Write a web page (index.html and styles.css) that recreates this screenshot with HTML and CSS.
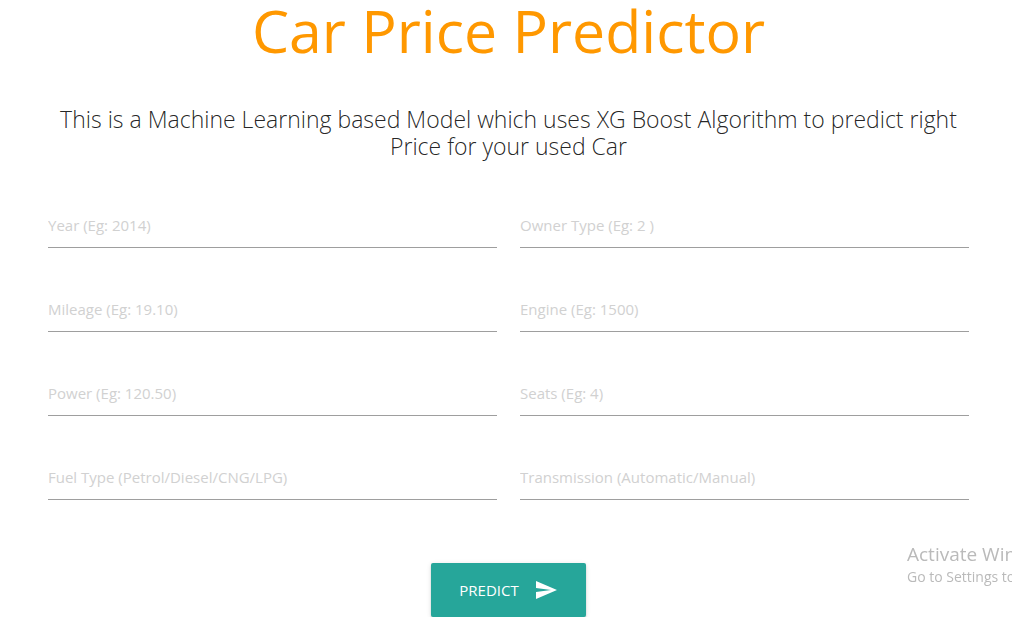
FILE: index.html
```html
<!DOCTYPE html>
<html lang="en">
<head>
<meta charset="utf-8">
<meta name="viewport" content="width=device-width, initial-scale=1">
<title>Car Price Predictor</title>
<link rel="stylesheet" href="styles.css">
</head>
<body>
<main class="page">
  <h1 class="title">Car Price Predictor</h1>
  <h2 class="subtitle">This is a Machine Learning based Model which uses XG Boost Algorithm to predict right Price for your used Car</h2>
  <form class="form">
    <div class="fields">
      <input class="field" type="text" name="year" aria-label="Year" placeholder="Year (Eg: 2014)">
      <input class="field" type="text" name="owner" aria-label="Owner Type" placeholder="Owner Type (Eg: 2 )">
      <input class="field" type="text" name="mileage" aria-label="Mileage" placeholder="Mileage (Eg: 19.10)">
      <input class="field" type="text" name="engine" aria-label="Engine" placeholder="Engine (Eg: 1500)">
      <input class="field" type="text" name="power" aria-label="Power" placeholder="Power (Eg: 120.50)">
      <input class="field" type="text" name="seats" aria-label="Seats" placeholder="Seats (Eg: 4)">
      <input class="field" type="text" name="fuel" aria-label="Fuel Type" placeholder="Fuel Type (Petrol/Diesel/CNG/LPG)">
      <input class="field" type="text" name="transmission" aria-label="Transmission" placeholder="Transmission (Automatic/Manual)">
    </div>
    <button class="predict" type="submit">Predict
      <svg class="send" viewBox="0 0 24 24" aria-hidden="true"><path d="M2.01 21L23 12 2.01 3 2 10l15 2-15 2z"/></svg>
    </button>
  </form>
</main>
<aside class="notice">
  <p class="notice-title">Activate Windows</p>
  <p class="notice-text">Go to Settings to activate Windows.</p>
</aside>
</body>
</html>
```
FILE: styles.css
```css
* { box-sizing: border-box; }
body {
  margin: 0;
  background: #fff;
  color: rgba(0, 0, 0, 0.87);
  font-family: "Segoe UI", "Open Sans", "Noto Sans", sans-serif;
  overflow: hidden;
}
.page { padding: 0 43px 0 48px; }
.title {
  margin: 0;
  color: #ff9800;
  font-size: 59px;
  font-weight: 400;
  line-height: 60px;
  text-align: center;
}
.subtitle {
  margin: 46px 0 0;
  font-size: 23px;
  font-weight: 300;
  line-height: 27px;
  text-align: center;
}
.form { margin-top: 42px; text-align: center; }
.fields {
  display: grid;
  grid-template-columns: 1fr 1fr;
  gap: 38px 23px;
}
.field {
  width: 100%;
  height: 46px;
  padding: 0;
  border: 0;
  border-bottom: 1px solid #9e9e9e;
  border-radius: 0;
  outline: none;
  background: transparent;
  color: inherit;
  font: 400 15px/20px "Segoe UI", "Open Sans", "Noto Sans", sans-serif;
}
.field::placeholder { color: #d1d1d1; opacity: 1; }
.predict {
  display: inline-flex;
  align-items: center;
  gap: 15px;
  height: 54px;
  margin-top: 63px;
  padding: 0 28px;
  border: 0;
  border-radius: 2px;
  background: #26a69a;
  box-shadow: 0 2px 2px rgba(0, 0, 0, 0.14), 0 1px 5px rgba(0, 0, 0, 0.12);
  color: #fff;
  font: 400 15px/20px "Segoe UI", "Open Sans", "Noto Sans", sans-serif;
  text-transform: uppercase;
}
.send { width: 24px; height: 24px; fill: currentColor; }
.notice {
  position: fixed;
  top: 542px;
  left: calc(100% - 105px);
  white-space: nowrap;
  color: #bababa;
  pointer-events: none;
}
.notice-title { margin: 0; font-size: 19px; line-height: 24px; }
.notice-text { margin: 0; font-size: 14px; line-height: 21px; }
```
